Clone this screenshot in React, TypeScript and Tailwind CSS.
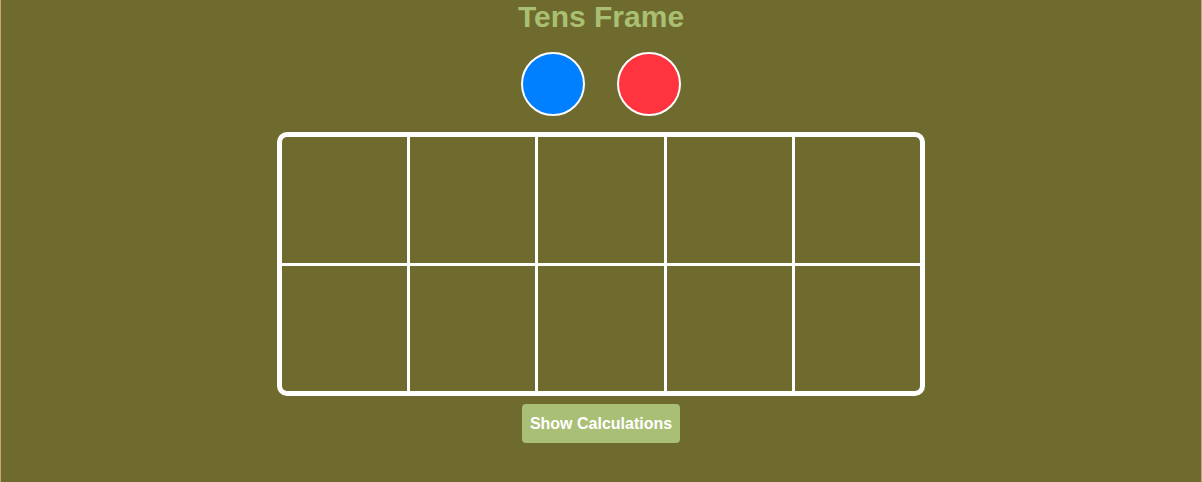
import React from "react";

export default function App() {
  const cells = Array.from({ length: 10 });
  return (
    <div
      className="w-[1202px] h-[482px] overflow-hidden bg-[#6f6b2e] border-x border-[#c9a27c] flex flex-col items-center"
      style={{ fontFamily: '"Liberation Sans", Arial, sans-serif' }}
    >
      <h1 className="text-[30px] leading-[34px] font-bold text-[#a9bf72] mt-0">Tens Frame</h1>
      <div className="flex gap-8 mt-[18px]">
        <div className="w-16 h-16 rounded-full bg-[#0080ff] border-2 border-white" />
        <div className="w-16 h-16 rounded-full bg-[#ff343e] border-2 border-white" />
      </div>
      <div className="mt-4 w-[648px] border-[5px] border-white rounded-[10px] bg-white overflow-hidden">
        <div className="grid grid-cols-5 gap-[3px]">
          {cells.map((_, i) => (
            <div key={i} className="h-[125.5px] bg-[#6f6b2e]" />
          ))}
        </div>
      </div>
      <button className="mt-[8px] h-[39px] px-2 rounded bg-[#aabf76] text-white font-bold text-[16px] leading-[19px]">
        Show Calculations
      </button>
    </div>
  );
}
